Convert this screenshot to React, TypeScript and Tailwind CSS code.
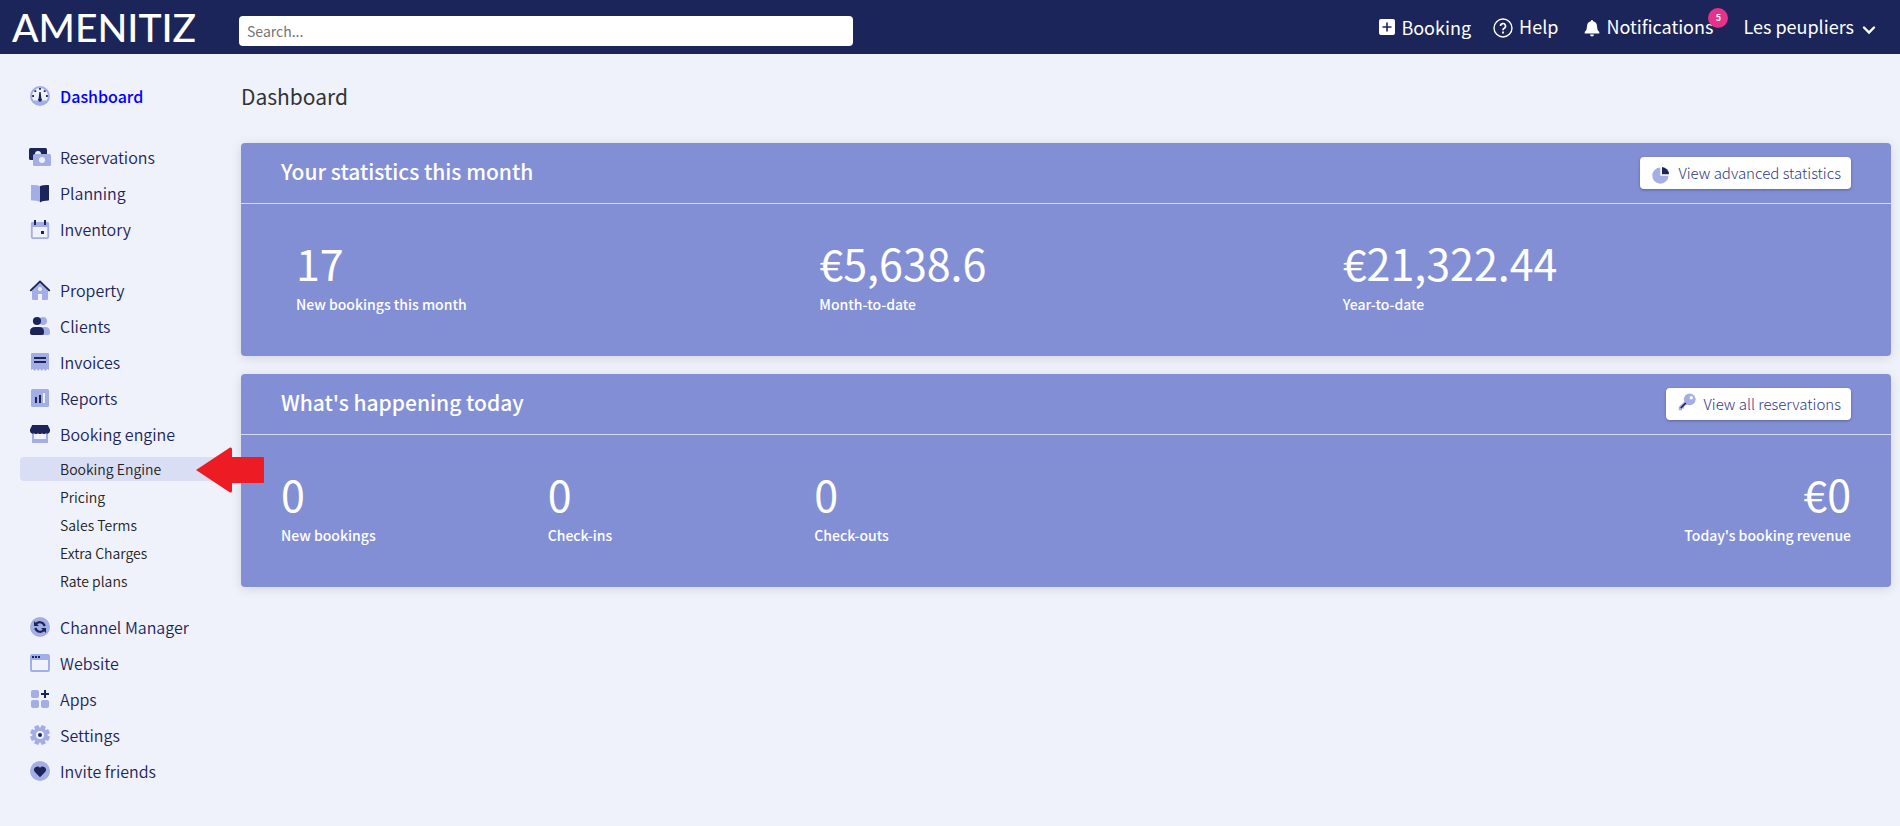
import type { ReactNode } from "react";

const DARK = "#1b2559";
const SOFT = "#a3ade6";
const PALE = "#eff2fb";

const icons: Record<string, ReactNode> = {
    dashboard: (
        <>
            <circle cx="10" cy="10" r="10" fill={SOFT} />
            <path d="M3.4 14.5A8 8 0 1 1 16.6 14.5Z" fill={PALE} />
            <path d="M9.3 6h1.4l.6 6.2a2 2 0 1 1-2.6 0Z" fill={DARK} />
            <path d="M9.1 2h1.8v1.8H9.1zM4.4 4.2h1.8V6H4.4zM13.8 4.2h1.8V6h-1.8zM2.2 9.1H4v1.8H2.2zM16 9.1h1.8v1.8H16z" fill={DARK} />
        </>
    ),
    reservations: (
        <>
            <rect x="-1" y="1" width="18" height="12" rx="1.5" fill={DARK} />
            <circle cx="8" cy="7" r="3" fill={PALE} />
            <rect x="3" y="7" width="18" height="12" rx="1.5" fill={SOFT} />
            <circle cx="12" cy="13" r="3" fill={PALE} />
        </>
    ),
    planning: (
        <>
            <path d="M1 2.5Q1 2 1.6 2C5 2 8 2 10 3.2V19C8 17.7 5 17.5 1.6 17.4Q1 17.4 1 16.8Z" fill={SOFT} />
            <path d="M19 2.5Q19 2 18.4 2C15 2 12 2 10 3.2V19.5C12 17.9 15 17.5 18.4 17.4Q19 17.4 19 16.8Z" fill={DARK} />
        </>
    ),
    inventory: (
        <>
            <rect x="1.8" y="3.8" width="16.4" height="15.4" rx="1.2" fill="none" stroke={SOFT} strokeWidth="1.8" />
            <path d="M1 4.5A1.5 1.5 0 0 1 2.5 3h15A1.5 1.5 0 0 1 19 4.5V8H1z" fill={SOFT} />
            <path d="M4 1h2v5H4zM14 1h2v5h-2zM11 12h3v3h-3z" fill={DARK} />
        </>
    ),
    property: (
        <>
            <path d="M10 3 18 10.6V19Q18 20 17 20H12V14H8v6H3Q2 20 2 19V10.6Z" fill={SOFT} />
            <circle cx="10" cy="9" r="2" fill={PALE} />
            <path d="M.8 10.4 10 1.6l9.2 8.8" fill="none" stroke={DARK} strokeWidth="2" strokeLinecap="round" />
        </>
    ),
    clients: (
        <>
            <circle cx="13" cy="5" r="4" fill={SOFT} />
            <path d="M8 19v-3.5Q8 11 13 11h2q5 0 5 4.5V17q0 2-2 2Z" fill={SOFT} />
            <circle cx="7" cy="5" r="4.1" fill={DARK} />
            <path d="M0 15.5Q0 11 5 11h4q5 0 5 4.5V17q0 2-2 2H2q-2 0-2-2Z" fill={DARK} />
        </>
    ),
    invoices: (
        <>
            <path d="M1 2.3Q1 1 2.3 1h15.4Q19 1 19 2.3V18l-1.8-1-1.8 2-1.8-2-1.8 2-1.8-2-1.8 2-1.8-2-1.8 2-1.8-2L1 18Z" fill={SOFT} />
            <path d="M4 5h12v2H4zM4 9h12v2H4z" fill={DARK} />
        </>
    ),
    reports: (
        <>
            <rect x="1" y="1" width="18" height="18" rx="1.5" fill={SOFT} />
            <path d="M5 9h2v6H5zM9 7h2v8H9z" fill={DARK} />
            <path d="M13 5h2v10h-2z" fill={PALE} />
        </>
    ),
    engine: (
        <>
            <path d="M2 8h16v10.2q0 .8-.8.8H2.8q-.8 0-.8-.8z" fill={SOFT} />
            <path d="M4 9h12v6H4z" fill={PALE} />
            <path d="M2.2 1h15.6L20 5.5V7a2.6 2.6 0 0 1-4 2.200 3 3 0 0 1-4 0 3 3 0 0 1-4 0 3 3 0 0 1-4 0A2.600 2.600 0 0 1 0 7V5.500Z" fill={DARK} />
        </>
    ),
    channel: (
        <>
            <circle cx="10" cy="10" r="10" fill={SOFT} />
            <path d="M5.6 7.6C8 4 13 4.5 14.8 9M14.400 12.400C12 16 7 15.500 5.200 11" fill="none" stroke={DARK} strokeWidth="2.2" />
            <path d="M4 4v5h5zM16 16v-5h-5z" fill={DARK} />
        </>
    ),
    website: (
        <>
            <rect x="1" y="2" width="18" height="16" rx="1" fill="none" stroke={SOFT} strokeWidth="2" />
            <path d="M1 2h18v5H1z" fill={SOFT} />
            <path d="M2 3h2v2H2zM5 3h2v2H5zM8 3h2v2H8z" fill={DARK} />
        </>
    ),
    apps: (
        <>
            <rect x="1" y="1" width="8" height="8" rx="2" fill={SOFT} />
            <rect x="1" y="11" width="8" height="8" rx="2" fill={SOFT} />
            <rect x="11" y="11" width="8" height="8" rx="2" fill={SOFT} />
            <path d="M14 1h2v3h3v2h-3v3h-2V6h-3V4h3z" fill={DARK} />
        </>
    ),
    settings: (
        <>
            {[22.5, 67.5, 112.5, 157.5].map((angle) => (
                <rect key={angle} x="7.6" y="0" width="4.8" height="20" rx="1" fill={SOFT} transform={`rotate(${angle} 10 10)`} />
            ))}
            <circle cx="10" cy="10" r="7.6" fill={SOFT} />
            <circle cx="10" cy="10" r="4" fill={PALE} />
            <circle cx="10" cy="10" r="2" fill={DARK} />
        </>
    ),
    invite: (
        <>
            <circle cx="10" cy="10" r="10" fill={SOFT} />
            <path d="M10 16.2 4.9 11A3.3 3.3 0 0 1 10 6.8 3.300 3.300 0 0 1 15.100 11Z" fill={DARK} />
        </>
    ),
};

interface NavItem {
    label: string;
    icon: string;
}

const reservationLinks: NavItem[] = [
    { label: "Reservations", icon: "reservations" },
    { label: "Planning", icon: "planning" },
    { label: "Inventory", icon: "inventory" },
];

const propertyLinks: NavItem[] = [
    { label: "Property", icon: "property" },
    { label: "Clients", icon: "clients" },
    { label: "Invoices", icon: "invoices" },
    { label: "Reports", icon: "reports" },
    { label: "Booking engine", icon: "engine" },
];

const engineLinks = ["Booking Engine", "Pricing", "Sales Terms", "Extra Charges", "Rate plans"];

const otherLinks: NavItem[] = [
    { label: "Channel Manager", icon: "channel" },
    { label: "Website", icon: "website" },
    { label: "Apps", icon: "apps" },
    { label: "Settings", icon: "settings" },
    { label: "Invite friends", icon: "invite" },
];

function NavLink({ item, active }: { item: NavItem; active?: boolean }) {
    return (
        <a
            href="#"
            className={
                active
                    ? "flex h-9 items-center gap-2.5 pl-[30px] text-base font-medium text-[#0000ff]"
                    : "flex h-9 items-center gap-2.5 pl-[30px] text-base font-[350] text-[#1b2559]"
            }
        >
            <svg viewBox="0 0 20 20" className="size-5 shrink-0 overflow-visible" aria-hidden="true">
                {icons[item.icon]}
            </svg>
            {item.label}
        </a>
    );
}

function NavGroup({ items }: { items: NavItem[] }) {
    return (
        <div>
            {items.map((item) => (
                <NavLink key={item.label} item={item} />
            ))}
        </div>
    );
}

function SideNav() {
    return (
        <nav className="flex w-[241px] shrink-0 flex-col gap-[25px] pt-6">
            <NavLink item={{ label: "Dashboard", icon: "dashboard" }} active />
            <NavGroup items={reservationLinks} />
            <div>
                <NavGroup items={propertyLinks} />
                <div className="mt-[3px] mb-3.5 ml-5">
                    {engineLinks.map((label, i) => (
                        <div key={label} className="relative flex h-7 items-center">
                            <a
                                href="#"
                                className={
                                    i === 0
                                        ? "flex h-6 w-[210px] items-center rounded-sm bg-[#d9def5] pl-10 text-sm font-[350] text-[#222222]"
                                        : "flex h-6 w-[210px] items-center pl-10 text-sm font-[350] text-[#222222]"
                                }
                            >
                                {label}
                            </a>
                            {i === 0 && <Pointer />}
                        </div>
                    ))}
                </div>
                <NavGroup items={otherLinks} />
            </div>
        </nav>
    );
}

// red arrow lying over the menu and the card edge
function Pointer() {
    return (
        <svg viewBox="0 0 68 46" className="absolute -top-2 left-44 z-10 h-[46px] w-[68px]" aria-hidden="true">
            <path d="M0 23 34 0.5Q36 0 36 2V10H67Q68 10 68 11V35Q68 36 67 36H36V44Q36 46 34 45.5Z" fill="#ed1c24" />
        </svg>
    );
}

function Header() {
    return (
        <header className="flex h-[54px] items-center bg-[#1b2559] text-lg text-white">
            <a href="#" className="w-[239px] shrink-0 pl-3 font-['Lato',sans-serif] text-[39px] leading-[54px] font-medium">
                AMENITIZ
            </a>
            <input
                type="search"
                aria-label="Search"
                placeholder="Search..."
                className="mt-2 h-[30px] w-[614px] min-w-0 rounded-sm bg-white px-2 text-sm font-normal text-[#333333] placeholder:text-[#757575]"
            />
            <div className="ml-auto flex shrink-0 items-center pr-6 pb-0.5 leading-7">
                <a href="#" className="mt-0.5 mr-[22px] flex items-center gap-1.5">
                    <svg viewBox="0 0 16 16" className="size-4" aria-hidden="true">
                        <rect width="16" height="16" rx="2" fill="#ffffff" />
                        <path d="M8 3.5v9M3.5 8h9" stroke={DARK} strokeWidth="1.6" />
                    </svg>
                    Booking
                </a>
                <a href="#" className="mr-[26px] flex items-center gap-1.5">
                    <svg viewBox="0 0 20 20" className="mt-1 size-5" fill="none" stroke="#ffffff" aria-hidden="true">
                        <circle cx="10" cy="10" r="9" strokeWidth="1.4" />
                        <path d="M7.5 8a2.5 2.5 0 1 1 3.7 2.2Q10 10.8 10 12.2" strokeWidth="1.7" />
                        <path d="M10 13.5v1.9" strokeWidth="1.9" />
                    </svg>
                    Help
                </a>
                <a href="#" className="relative mr-[30px] flex items-center gap-1.5">
                    <svg viewBox="0 0 16 18" className="mt-1 h-[18px] w-4" fill="#ffffff" aria-hidden="true">
                        <path d="M8 1q1 0 1.2 1.2Q13 3.2 13 7.5q0 4 2.3 5.500v1.500H.700V13Q3 11.500 3 7.500 3 3.200 6.800 2.200 7 1 8 1ZM6 15.500h4Q9.700 17.500 8 17.500T6 15.500Z" />
                    </svg>
                    Notifications
                    <span className="absolute -top-1 -right-[15px] flex size-5 items-center justify-center rounded-full bg-[#e8318a] text-[9px] font-bold">
                        5
                    </span>
                </a>
                <button type="button" className="flex items-center gap-2">
                    Les peupliers
                    <svg viewBox="0 0 14 10" className="mt-2 h-2.5 w-3.5" fill="none" stroke="#ffffff" strokeWidth="2.4" aria-hidden="true">
                        <path d="M2 2.500 7 7.500 12 2.500" strokeLinecap="round" />
                    </svg>
                </button>
            </div>
        </header>
    );
}

function Stat({ value, label }: { value: string; label: string }) {
    return (
        <div>
            <div className="text-[43px] leading-12">{value}</div>
            <div className="mt-0.5 text-sm leading-8 font-medium">{label}</div>
        </div>
    );
}

interface CardProps {
    title: string;
    action: string;
    icon: ReactNode;
    children: ReactNode;
}

function Card({ title, action, icon, children }: CardProps) {
    return (
        <section className="rounded-sm bg-[#838fd5] text-white shadow-[0_2px_12px_rgba(0,0,0,0.12)]">
            <div className="flex h-[61px] items-center justify-between border-b border-[#d5daf3] px-10">
                <h2 className="pb-1 text-[21px] leading-8 font-medium">{title}</h2>
                <button
                    type="button"
                    className="flex h-8 items-center gap-2 rounded-sm bg-white pr-2.5 pl-3 text-[15px] font-light text-[#2e3a80] shadow-[0_1px_3px_rgba(0,0,0,0.3)]"
                >
                    {icon}
                    {action}
                </button>
            </div>
            <div className="pt-[34px] pb-9">{children}</div>
        </section>
    );
}

const pieIcon = (
    <svg viewBox="0 0 18 18" className="mt-1 size-[18px]" aria-hidden="true">
        <path d="M8.3 1.5V9.7H16.5A8.1 8.1 0 1 1 8.3 1.5Z" fill={SOFT} />
        <path d="M10 1A7.5 7.5 0 0 1 17 8.2H10Z" fill={DARK} />
    </svg>
);

const keyIcon = (
    <svg viewBox="0 0 18 18" className="mb-1 size-[18px]" aria-hidden="true">
        <path d="M6.5 8.5.8 14V17.3H4V15.5H6V13.5L9.5 11.2Z" fill={SOFT} />
        <circle cx="11.7" cy="6.3" r="5.9" fill={SOFT} />
        <circle cx="13.3" cy="4.7" r="1.7" fill="#ffffff" />
        <path d="M2.8 15 7.8 10" stroke={DARK} strokeWidth="1.7" />
    </svg>
);

export default function App() {
    return (
        <div className="min-h-screen bg-[#eff2fb] font-['Noto_Sans_CJK_JP',sans-serif]">
            <Header />
            <div className="flex">
                <SideNav />
                <main className="min-w-0 flex-1 pr-[9px] pb-8">
                    <h1 className="pt-[26px] pb-[31px] text-[21px] leading-8 font-normal text-[#333333]">Dashboard</h1>
                    <div className="flex flex-col gap-[18px]">
                        <Card title="Your statistics this month" action="View advanced statistics" icon={pieIcon}>
                            <div className="grid grid-cols-3 pr-[25px] pl-[55px]">
                                <Stat value="17" label="New bookings this month" />
                                <Stat value="€5,638.6" label="Month-to-date" />
                                <Stat value="€21,322.44" label="Year-to-date" />
                            </div>
                        </Card>
                        <Card title="What's happening today" action="View all reservations" icon={keyIcon}>
                            <div className="grid grid-cols-6 pr-2.5 pl-10">
                                <Stat value="0" label="New bookings" />
                                <Stat value="0" label="Check-ins" />
                                <Stat value="0" label="Check-outs" />
                                <div className="col-span-3 pr-[30px] text-right">
                                    <Stat value="€0" label="Today's booking revenue" />
                                </div>
                            </div>
                        </Card>
                    </div>
                </main>
            </div>
        </div>
    );
}
